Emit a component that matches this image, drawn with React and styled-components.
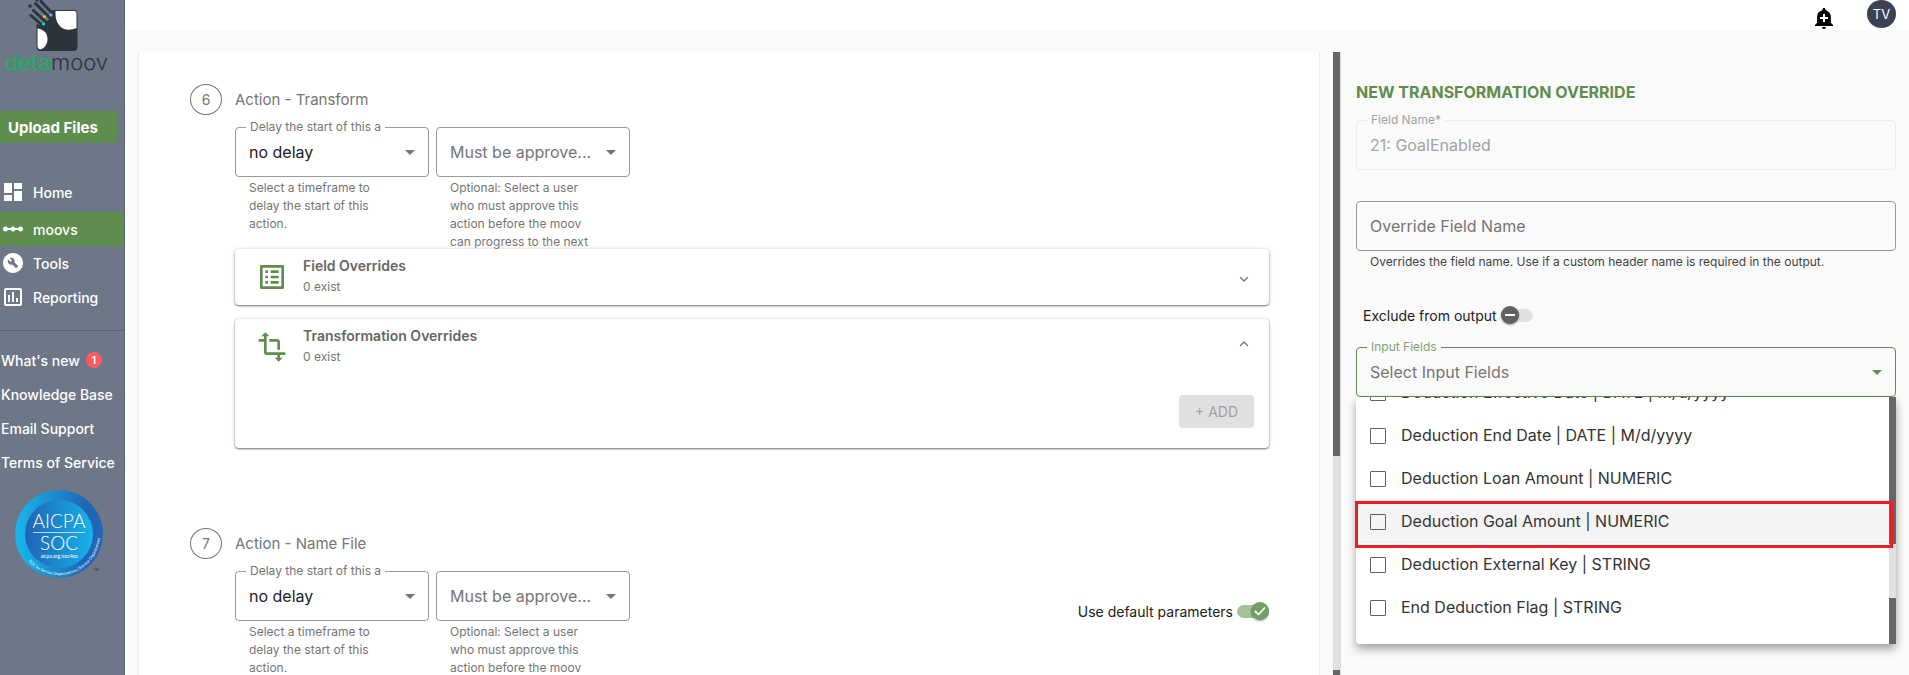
import React, { useLayoutEffect, useRef } from "react";
import styled, { createGlobalStyle, css } from "styled-components";
import { MdAddAlert, MdBuildCircle, MdDashboard, MdLinearScale, MdListAlt, MdTransform, MdOutlineAssessment } from "react-icons/md";

const green = "#5f8d4e";

const GlobalStyle = createGlobalStyle`
  *, *::before, *::after { box-sizing: border-box; }
  body {
    margin: 0;
    font-family: Inter, "Open Sans", sans-serif;
    font-size: 14px;
    color: #212121;
    background: #fafafa;
  }
  button, input, select { font: inherit; color: inherit; }
`;

const Page = styled.div`
  display: flex;
  height: 100vh;
  overflow: hidden;
`;

const Sidebar = styled.aside`
  flex: 0 0 125px;
  border-right: 1px solid #5b6474;
  background: #6e7787;
  color: #fff;
`;

const Brand = styled.a`
  display: block;
  height: 111px;
  text-decoration: none;
`;

const LogoMark = styled.svg`
  display: block;
  width: 124px;
  height: 52px;
`;

const Wordmark = styled.span`
  display: block;
  padding-left: 5px;
  font-size: 22px;
  line-height: 20px;
  font-weight: 300;
  color: #2b353b;
  b { font-weight: 400; color: #18b45a; }
`;

const UploadButton = styled.button`
  display: block;
  width: 117px;
  height: 32px;
  margin-bottom: 32px;
  padding: 0 8px;
  border: 0;
  border-radius: 0 4px 4px 0;
  background: ${green};
  color: #fff;
  font-size: 15px;
  font-weight: 700;
  text-align: left;
  white-space: nowrap;
`;

const NavLink = styled.a`
  display: flex;
  align-items: center;
  gap: 8px;
  height: 34px;
  margin-top: ${(p) => (p.$active ? 3 : 0)}px;
  padding-left: 1px;
  border-radius: 0 4px 4px 0;
  background: ${(p) => (p.$active ? green : "transparent")};
  color: #fff;
  font-size: 14px;
  font-weight: 500;
  text-decoration: none;
  svg { flex: none; }
`;

const Links = styled.nav`
  margin-top: 16px;
  padding-top: 12px;
  border-top: 1px solid #5b6474;
`;

const TextLink = styled.a`
  display: flex;
  align-items: center;
  gap: 6px;
  height: 34px;
  padding-left: 1px;
  color: #fff;
  font-size: 14px;
  font-weight: 500;
  text-decoration: none;
  white-space: nowrap;
`;

const CountBadge = styled.span`
  width: 16px;
  height: 16px;
  border-radius: 50%;
  background: #ff5a5f;
  font-size: 10px;
  line-height: 16px;
  font-weight: 700;
  text-align: center;
`;

const Seal = styled.svg`
  display: block;
  width: 90px;
  height: 90px;
  margin: 10px 0 0 14px;
  overflow: visible;
`;

const Body = styled.div`
  flex: 1;
  min-width: 0;
  display: flex;
  flex-direction: column;
`;

const TopBar = styled.header`
  flex: none;
  height: 30px;
  display: flex;
  align-items: flex-start;
  justify-content: flex-end;
  gap: 31px;
  padding-right: 13px;
  background: #fff;
`;

const IconButton = styled.button`
  display: flex;
  height: 30px;
  padding: 6px 0 0;
  border: 0;
  background: none;
  color: #000;
`;

const Avatar = styled.button`
  width: 29px;
  height: 28px;
  padding: 0;
  border: 0;
  border-radius: 50%;
  background: #3a4254;
  color: #fff;
  font-size: 13px;
`;

const Workspace = styled.div`
  flex: 1;
  min-height: 0;
  display: flex;
  padding: 22px 13px 0 13px;
`;

const Steps = styled.main`
  flex: 1;
  min-width: 0;
  overflow: hidden;
  margin-right: 13px;
  padding: 32px 50px 0 51px;
  border: solid #ececec;
  border-width: 0 1px;
  background: #fff;
`;

const ScrollTrack = styled.div`
  flex: 0 0 7px;
  display: flex;
  flex-direction: column;
  justify-content: space-between;
  background: #e0e0e0;
`;

const Thumb = styled.span`
  flex: 0 0 ${(p) => p.$size};
  background: #666;
`;

const Step = styled.section`
  display: grid;
  grid-template-columns: 32px 1fr;
  column-gap: 13px;
  align-content: start;
  padding-bottom: 66px;
`;

const StepNumber = styled.span`
  width: 32px;
  height: 31px;
  border: 1px solid #757575;
  border-radius: 50%;
  color: #757575;
  line-height: 29px;
  text-align: center;
`;

const StepTitle = styled.h2`
  margin: 0;
  color: #757575;
  font-size: 15px;
  line-height: 32px;
  font-weight: 400;
`;

const StepContent = styled.div`
  grid-column: 2;
  min-width: 0;
  padding-top: 1px;
`;

const Controls = styled.div`
  display: flex;
  gap: 7px;
  height: 132px;
  overflow: hidden;
  padding-top: 10px;
`;

const ControlCell = styled.div`
  flex: 0 0 194px;
`;

const Outline = styled.div`
  position: relative;
  height: 50px;
  border: 1px solid ${(p) => (p.$tone === "active" ? green : p.$tone === "disabled" ? "#ebebeb" : "#9a9a9a")};
  border-radius: 4px;
`;

const FloatLabel = styled.label`
  position: absolute;
  top: -9px;
  left: 10px;
  padding: 0 4px;
  background: ${(p) => p.$surface || "#fff"};
  color: ${(p) => p.$color || "#757575"};
  font-size: 12px;
  line-height: 16px;
  white-space: nowrap;
`;

const fieldText = css`
  width: 100%;
  height: 100%;
  padding: 0 13px;
  border: 0;
  outline: 0;
  background: transparent;
  color: ${(p) => p.$color || "#212121"};
  font-size: 16px;
`;

const Select = styled.select`
  ${fieldText}
  appearance: none;
`;

const TextInput = styled.input`
  ${fieldText}
  &::placeholder { color: #757575; opacity: 1; }
  &:disabled { color: #a3a3a3; }
`;

const Caret = styled.span`
  position: absolute;
  top: 22px;
  right: 13px;
  border: 5px solid transparent;
  border-top-color: ${(p) => p.$color || "#757575"};
  border-bottom: 0;
  pointer-events: none;
`;

const Hint = styled.p`
  margin: 2px 0 0;
  padding: 0 ${(p) => (p.$wide ? 0 : 32)}px 0 14px;
  color: ${(p) => (p.$wide ? "#424242" : "#757575")};
  font-size: 12px;
  line-height: 18px;
`;

const Card = styled.section`
  display: grid;
  grid-template-columns: 32px 1fr 24px;
  column-gap: 15px;
  min-height: 56px;
  margin-bottom: 14px;
  padding: 8px 13px 0 21px;
  border-radius: 4px;
  background: #fff;
  box-shadow: 0 1px 2px rgba(0, 0, 0, 0.5), 0 0 4px rgba(0, 0, 0, 0.14);
  > svg { margin-top: 4px; color: ${green}; }
`;

const CardTitle = styled.h3`
  margin: 0;
  color: #666;
  font-size: 14px;
  line-height: 18px;
  font-weight: 600;
`;

const CardNote = styled.p`
  margin: 3px 0 0;
  color: #757575;
  font-size: 12px;
  line-height: 18px;
`;

const Expand = styled.button`
  display: grid;
  place-items: center;
  height: 24px;
  margin-top: ${(p) => (p.$open ? 5 : 10)}px;
  padding: 0;
  border: 0;
  background: none;
  color: #757575;
`;

const CardActions = styled.div`
  grid-column: 1 / -1;
  display: flex;
  justify-content: flex-end;
  padding: 29px 2px 20px 0;
`;

const AddButton = styled.button`
  width: 75px;
  height: 33px;
  padding: 0;
  border: 0;
  border-radius: 4px;
  background: #e0e0e0;
  color: #a0a0a0;
  font-size: 14px;
`;

const ToggleRow = styled.label`
  display: flex;
  align-items: center;
  gap: 4px;
  height: 20px;
  margin: ${(p) => (p.$end ? "30px 0 0 auto" : "0")};
  padding-left: ${(p) => (p.$end ? 0 : 7)}px;
  font-size: 14px;
  white-space: nowrap;
`;

const ToggleBox = styled.span`
  position: relative;
  display: flex;
  width: 32px;
  height: 13px;
`;

const ToggleInput = styled.input`
  appearance: none;
  width: 32px;
  height: 13px;
  margin: 0;
  border-radius: 7px;
  background: #e0e0e0;
  &:checked { background: #a3c29a; }
`;

const ToggleKnob = styled.svg`
  position: absolute;
  top: -3px;
  ${(p) => (p.$on ? "right: 0;" : "left: 0;")}
  width: 18px;
  height: 18px;
  border-radius: 50%;
  background: ${(p) => (p.$on ? "#719f62" : "#616161")};
  box-shadow: 0 1px 2px rgba(0, 0, 0, 0.4);
  pointer-events: none;
`;

const Panel = styled.form`
  flex: 0 0 556px;
  padding: 30px 0 0 15px;
  border-left: 1px solid #ddd;
`;

const PanelTitle = styled.h2`
  margin: 0 0 18px;
  color: ${green};
  font-size: 16px;
  line-height: 20px;
  font-weight: 700;
  white-space: nowrap;
`;

const PanelField = styled.div`
  margin-bottom: ${(p) => p.$gap}px;
`;

const Menu = styled.div`
  position: absolute;
  top: 49px;
  left: -1px;
  right: -1px;
  display: flex;
  height: 247px;
  border-radius: 0 0 4px 4px;
  background: #fff;
  box-shadow: 0 5px 10px rgba(0, 0, 0, 0.35);
`;

const Options = styled.ul`
  flex: 1;
  margin: 0;
  padding: 0 0 15px;
  overflow-y: scroll;
  scrollbar-width: none;
  list-style: none;
`;

const Option = styled.label`
  display: flex;
  align-items: center;
  gap: 15px;
  height: 43px;
  padding-left: 14px;
  background: ${(p) => (p.$hot ? "#f4f4f4" : "#fff")};
  color: #333;
  font-size: 16px;
`;

const OptionText = styled.span`
  padding-bottom: 1px;
`;

const Check = styled.input`
  appearance: none;
  width: 16px;
  height: 16px;
  margin: 0;
  border: 1px solid #616161;
  border-radius: 1px;
`;

const Highlight = styled.span`
  position: absolute;
  top: 104px;
  left: -1px;
  right: 3px;
  height: 47px;
  border: 3px solid #ee1c25;
  pointer-events: none;
`;

const OPTIONS = [
  "Deduction Effective Date | DATE | M/d/yyyy",
  "Deduction End Date | DATE | M/d/yyyy",
  "Deduction Loan Amount | NUMERIC",
  "Deduction Goal Amount | NUMERIC",
  "Deduction External Key | STRING",
  "End Deduction Flag | STRING",
];

function Logo() {
  return (
    <Brand href="#" aria-label="detamoov">
      <LogoMark viewBox="0 0 124 52" aria-hidden="true">
        <path d="M52 10H73.500Q77.500 10 77.500 14V47Q77.500 51 73.500 51H40.500Q36.500 51 36.500 47V24L43 26L52 16Z" fill="#2b353b" />
        <path d="M55.500 11H74q2.500 0 2.500 2.500V28Q70 31 64 29C58 26 55.500 20 55.500 14Z" fill="#fff" />
        <path d="M37.500 28.500C44 29 47.500 34 47.500 39S45 48 40.500 49.500Q37.500 49 37.500 46Z" fill="#fff" />
        <g stroke="#2b353b" strokeWidth="3" strokeLinecap="round">
          <path d="M41 1.500L53 14M35.500 3.500L50 18M33.500 10.500L48 24M31 15.500L44 27M35 -2L37 0" />
        </g>
        <circle cx="30" cy="6" r="1.800" fill="#2b353b" />
        <circle cx="51" cy="15" r="1.600" fill="#8c9eff" />
        <circle cx="44.500" cy="16.500" r="1.600" fill="#fdc210" />
        <circle cx="43.500" cy="24" r="1.600" fill="#00d8d0" />
      </LogoMark>
      <Wordmark><b>deta</b>moov</Wordmark>
    </Brand>
  );
}

function SocSeal() {
  return (
    <Seal viewBox="0 0 90 90" role="img" aria-label="AICPA SOC">
      <defs>
        <linearGradient id="ring" x1="0" x2="1"><stop offset="0" stopColor="#18b8ec" /><stop offset="0.8" stopColor="#1f66b4" /></linearGradient>
        <linearGradient id="disc" x1="0" x2="1"><stop offset="0" stopColor="#2163b4" /><stop offset="1" stopColor="#17b3ea" /></linearGradient>
        <path id="arc" d="M14.500 72.400A41 41 0 0 0 82.200 27.700" />
      </defs>
      <circle cx="45" cy="45" r="44" fill="url(#ring)" />
      <circle cx="45" cy="45" r="34" fill="url(#disc)" />
      <g fill="#fff" textAnchor="middle" fontFamily="Lato, sans-serif" fontWeight="300">
        <text x="45" y="39" fontSize="19">AICPA</text>
        <text x="45" y="61" fontSize="19">SOC</text>
        <text x="45" y="69" fontSize="5" fontWeight="400">aicpa.org/soc4so</text>
      </g>
      <path d="M19 43.500H71" stroke="#fff" strokeOpacity="0.7" />
      <text fill="#fff" fontSize="4" fontFamily="Lato, sans-serif"><textPath href="#arc">SOC for Service Organizations | Service Organizations</textPath></text>
      <text x="80" y="82" fontSize="3" fill="#222">TM</text>
    </Seal>
  );
}

function Chevron({ open }) {
  return (
    <svg width="10" height="6" viewBox="0 0 10 6" fill="none" stroke="currentColor" strokeWidth="1.300" aria-hidden="true">
      <path d={open ? "M1 5L5 1L9 5" : "M1 1L5 5L9 1"} />
    </svg>
  );
}

function Toggle({ label, on, end }) {
  return (
    <ToggleRow $end={end}>
      {label}
      <ToggleBox>
        <ToggleInput type="checkbox" role="switch" defaultChecked={on} />
        <ToggleKnob $on={on} viewBox="0 0 18 18" fill="none" stroke="#fff" strokeWidth="1.800" aria-hidden="true">
          <path d={on ? "M4 9L7.500 12.500L14 5.500" : "M4 9H14"} />
        </ToggleKnob>
      </ToggleBox>
    </ToggleRow>
  );
}

function StepControls({ id, children }) {
  return (
    <Controls>
      <ControlCell>
        <Outline>
          <FloatLabel htmlFor={id + "-delay"}>Delay the start of this a</FloatLabel>
          <Select id={id + "-delay"}><option>no delay</option></Select>
          <Caret />
        </Outline>
        <Hint>Select a timeframe to delay the start of this action.</Hint>
      </ControlCell>
      <ControlCell>
        <Outline>
          <Select $color="#757575" aria-label="Must be approved by"><option>Must be approve...</option></Select>
          <Caret />
        </Outline>
        <Hint>Optional: Select a user who must approve this action before the moov can progress to the next</Hint>
      </ControlCell>
      {children}
    </Controls>
  );
}

function OverrideMenu() {
  const list = useRef(null);
  useLayoutEffect(() => {
    list.current.scrollTop = list.current.scrollHeight;
  }, []);
  return (
    <Menu>
      <Options ref={list}>
        {OPTIONS.map((text, i) => (
          <li key={text}>
            <Option $hot={i === 3}><Check type="checkbox" /><OptionText>{text}</OptionText></Option>
          </li>
        ))}
      </Options>
      <ScrollTrack><Thumb $size="147px" /><Thumb $size="46px" /></ScrollTrack>
      <Highlight />
    </Menu>
  );
}

export default function App() {
  return (
    <Page>
      <GlobalStyle />
      <Sidebar>
        <Logo />
        <UploadButton type="button">Upload Files</UploadButton>
        <nav>
          <NavLink href="#"><MdDashboard size={24} />Home</NavLink>
          <NavLink href="#" $active><MdLinearScale size={24} />moovs</NavLink>
          <NavLink href="#"><MdBuildCircle size={24} />Tools</NavLink>
          <NavLink href="#"><MdOutlineAssessment size={24} />Reporting</NavLink>
        </nav>
        <Links>
          <TextLink href="#">What's new<CountBadge>1</CountBadge></TextLink>
          <TextLink href="#">Knowledge Base</TextLink>
          <TextLink href="#">Email Support</TextLink>
          <TextLink href="#">Terms of Service</TextLink>
        </Links>
        <SocSeal />
      </Sidebar>
      <Body>
        <TopBar>
          <IconButton type="button" aria-label="Notifications"><MdAddAlert size={24} /></IconButton>
          <Avatar type="button">TV</Avatar>
        </TopBar>
        <Workspace>
          <Steps>
            <Step>
              <StepNumber>6</StepNumber>
              <StepTitle>Action - Transform</StepTitle>
              <StepContent>
                <StepControls id="transform" />
                <Card>
                  <MdListAlt size={32} />
                  <div><CardTitle>Field Overrides</CardTitle><CardNote>0 exist</CardNote></div>
                  <Expand type="button" aria-label="Expand field overrides"><Chevron /></Expand>
                </Card>
                <Card>
                  <MdTransform size={32} />
                  <div><CardTitle>Transformation Overrides</CardTitle><CardNote>0 exist</CardNote></div>
                  <Expand type="button" $open aria-label="Collapse transformation overrides"><Chevron open /></Expand>
                  <CardActions><AddButton type="button" disabled>+ ADD</AddButton></CardActions>
                </Card>
              </StepContent>
            </Step>
            <Step>
              <StepNumber>7</StepNumber>
              <StepTitle>Action - Name File</StepTitle>
              <StepContent>
                <StepControls id="name-file"><Toggle label="Use default parameters" on end /></StepControls>
              </StepContent>
            </Step>
          </Steps>
          <ScrollTrack><Thumb $size="404px" /><Thumb $size="5px" /></ScrollTrack>
          <Panel>
            <PanelTitle>NEW TRANSFORMATION OVERRIDE</PanelTitle>
            <PanelField $gap={31}>
              <Outline $tone="disabled">
                <FloatLabel htmlFor="field-name" $surface="#fafafa" $color="#a3a3a3">Field Name*</FloatLabel>
                <TextInput id="field-name" defaultValue="21: GoalEnabled" disabled />
              </Outline>
            </PanelField>
            <PanelField $gap={34}>
              <Outline><TextInput aria-label="Override Field Name" placeholder="Override Field Name" /></Outline>
              <Hint $wide>Overrides the field name. Use if a custom header name is required in the output.</Hint>
            </PanelField>
            <PanelField $gap={22}><Toggle label="Exclude from output" /></PanelField>
            <Outline $tone="active">
              <FloatLabel htmlFor="input-fields" $surface="#fafafa" $color="#7fa472">Input Fields</FloatLabel>
              <Select id="input-fields" $color="#757575"><option>Select Input Fields</option></Select>
              <Caret $color={green} />
              <OverrideMenu />
            </Outline>
          </Panel>
        </Workspace>
      </Body>
    </Page>
  );
}
